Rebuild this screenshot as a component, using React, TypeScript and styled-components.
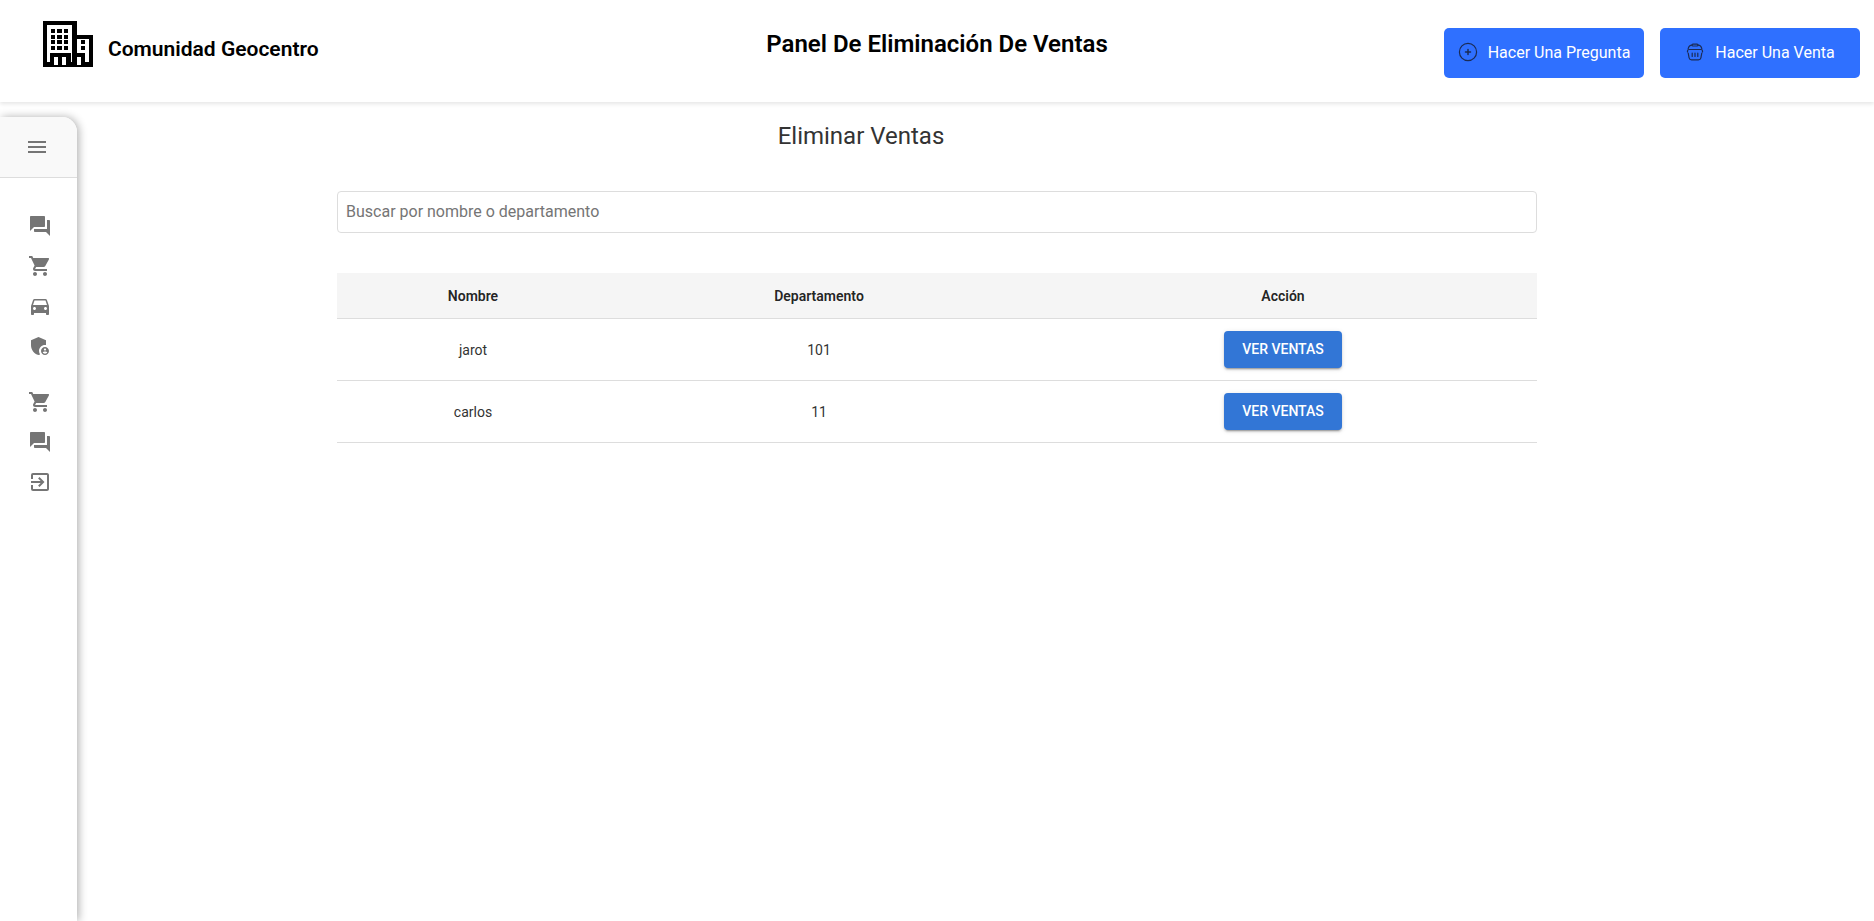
import React from "react";
import styled, { createGlobalStyle } from "styled-components";
import {
  MdAdminPanelSettings,
  MdDirectionsCar,
  MdExitToApp,
  MdForum,
  MdMenu,
  MdShoppingCart,
} from "react-icons/md";

const GlobalStyle = createGlobalStyle`
  *, *::before, *::after { box-sizing: border-box; }
  body {
    margin: 0;
    background: #fff;
    color: #000;
    font-family: Roboto, "Liberation Sans", sans-serif;
  }
  button, input { font-family: inherit; }
`;

const Page = styled.div`
  display: flex;
  flex-direction: column;
  min-height: 100vh;
`;

const Header = styled.header`
  display: grid;
  grid-template-columns: 1fr auto 1fr;
  align-items: start;
  height: 102px;
  padding: 0 14px;
  box-shadow: 0 2px 4px rgba(0, 0, 0, 0.1);
`;

const Brand = styled.a`
  display: flex;
  align-items: flex-start;
  gap: 15px;
  padding: 21px 0 0 29px;
  color: inherit;
  text-decoration: none;
`;

const BrandName = styled.span`
  padding-top: 16px;
  font-size: 21px;
  font-weight: 600;
  line-height: 24px;
`;

const PageTitle = styled.h1`
  margin: 0;
  padding-top: 28px;
  font-size: 24px;
  font-weight: 600;
  line-height: 32px;
`;

const HeaderActions = styled.div`
  display: flex;
  justify-content: flex-end;
  gap: 16px;
  padding-top: 28px;
`;

const ActionButton = styled.button`
  display: flex;
  align-items: center;
  justify-content: center;
  gap: 10px;
  width: 200px;
  height: 50px;
  padding: 0 0 2px;
  border: 0;
  border-radius: 5px;
  background: #2f70ff;
  color: #fff;
  font-size: 16px;
  cursor: pointer;
`;

const Body = styled.div`
  display: flex;
  flex: 1;
`;

const Sidebar = styled.aside`
  display: flex;
  flex-direction: column;
  flex: none;
  width: 77px;
  margin-top: 15px;
  border-top-right-radius: 15px;
  background: #fff;
  box-shadow: 2px 0 8px rgba(0, 0, 0, 0.3);
  overflow: hidden;
`;

const SidebarTop = styled.div`
  display: flex;
  align-items: center;
  height: 61px;
  padding-left: 25px;
  border-bottom: 1px solid #ddd;
  background: #f9f9f9;
`;

const IconButton = styled.button`
  display: flex;
  padding: 0;
  border: 0;
  background: none;
  color: #757575;
  cursor: pointer;
`;

const NavList = styled.ul`
  display: flex;
  flex-direction: column;
  gap: 16px;
  margin: 0;
  padding: 36px 0 0 28px;
  list-style: none;

  & + & {
    padding-top: 32px;
  }
`;

const NavLink = styled.a`
  display: flex;
  width: 24px;
  color: #757575;
`;

/* The wider right padding balances the sidebar, so the content sits in the middle of the window. */
const Main = styled.main`
  flex: 1;
  min-width: 0;
  padding: 18px 93px 32px 16px;
`;

const Content = styled.div`
  max-width: 1200px;
  margin: 0 auto;
`;

const SectionTitle = styled.h2`
  margin: 0 0 39px;
  padding-right: 152px;
  color: #333;
  font-size: 24px;
  font-weight: 400;
  line-height: 32px;
  text-align: center;
`;

const SearchInput = styled.input`
  display: block;
  width: 100%;
  height: 42px;
  margin-bottom: 40px;
  padding: 0 8px 2px;
  border: 1px solid #ddd;
  border-radius: 4px;
  background: #fff;
  color: #333;
  font-size: 16px;

  &::placeholder { color: #757575; }
`;

const Table = styled.table`
  width: 100%;
  border-collapse: separate;
  border-spacing: 0;
  table-layout: fixed;
  font-size: 14px;
  line-height: 20px;
  text-align: center;
`;

const HeadCell = styled.th<{ $width?: string }>`
  width: ${({ $width }) => $width ?? "auto"};
  height: 46px;
  padding: 12px 16px;
  border-bottom: 1px solid #ddd;
  background: #f5f5f5;
  color: rgba(0, 0, 0, 0.87);
  font-weight: 600;
`;

const Cell = styled.td`
  padding: 12px 16px;
  border-bottom: 1px solid #ddd;
  color: #333;
`;

const SalesButton = styled.button`
  height: 37px;
  padding: 0 18px 2px;
  border: 0;
  border-radius: 4px;
  background: #3276d6;
  box-shadow: 0 3px 1px -2px rgba(0, 0, 0, 0.2), 0 2px 2px rgba(0, 0, 0, 0.14), 0 1px 5px rgba(0, 0, 0, 0.12);
  color: #fff;
  font-size: 14px;
  font-weight: 500;
  text-transform: uppercase;
  vertical-align: middle;
  cursor: pointer;
`;

const BuildingLogo = () => (
  <svg width="50" height="46" viewBox="0 0 50 46" aria-hidden="true">
    <path d="M0 0h34v14h16v32H0z" />
    <path fill="#fff" d="M4 4h25v37h-1V32H7v9H4zM34 18h12v23h-4v-9h-8z" />
    <path d="M8 8h4v4H8zm6 0h5v4h-5zm7 0h4v4h-4zM8 14h4v4H8zm6 0h5v4h-5zm7 0h4v4h-4zM8 19h4v4H8zm6 0h5v4h-5zm7 0h4v4h-4zM8 25h4v4H8zm6 0h5v4h-5zm7 0h4v4h-4zM38 19h4v4h-4zm0 6h4v4h-4z" />
    <path fill="#fff" d="M11 36h4v8h-4zm8 0h4v8h-4zm15 0h4v8h-4z" />
  </svg>
);

const PlusCircle = () => (
  <svg width="20" height="20" viewBox="0 0 20 20" fill="none" stroke="#1b2b55" strokeLinecap="round" aria-hidden="true">
    <circle cx="10" cy="10" r="8.6" strokeWidth="1.2" />
    <path strokeWidth="1.5" d="M10 7.5v5M7.5 10h5" />
  </svg>
);

const Basket = () => (
  <svg width="20" height="20" viewBox="0 0 20 20" fill="none" stroke="#1b2b55" strokeWidth="1.2" strokeLinecap="round" strokeLinejoin="round" aria-hidden="true">
    <path d="M3.200 6.600C3.800 4 5.200 3.100 7 3.100M13 3.100c1.800 0 3.200.9 3.800 3.500" />
    <rect x="7" y="2.200" width="6" height="1.800" rx=".9" />
    <path d="M2.500 10V9q0-1.500 1.500-1.500h12q1.500 0 1.500 1.500v1" />
    <path d="M3.200 11l.9 4.800q.4 2 2.500 2h6.800q2.100 0 2.500-2l.9-4.800" />
    <path d="M7.200 11.200v3.300M10 11.200v3.300M12.800 11.200v3.300" />
  </svg>
);

const primaryLinks = [
  { label: "Preguntas", Icon: MdForum },
  { label: "Ventas", Icon: MdShoppingCart },
  { label: "Estacionamiento", Icon: MdDirectionsCar },
  { label: "Administración", Icon: MdAdminPanelSettings },
];

const secondaryLinks = [
  { label: "Eliminar ventas", Icon: MdShoppingCart },
  { label: "Eliminar preguntas", Icon: MdForum },
  { label: "Salir", Icon: MdExitToApp },
];

const sellers = [
  { name: "jarot", unit: "101" },
  { name: "carlos", unit: "11" },
];

const NavGroup = ({ links }: { links: typeof primaryLinks }) => (
  <NavList>
    {links.map(({ label, Icon }) => (
      <li key={label}>
        <NavLink href="#" aria-label={label}>
          <Icon size={24} />
        </NavLink>
      </li>
    ))}
  </NavList>
);

export default function App() {
  return (
    <Page>
      <GlobalStyle />
      <Header>
        <Brand href="#">
          <BuildingLogo />
          <BrandName>Comunidad Geocentro</BrandName>
        </Brand>
        <PageTitle>Panel De Eliminación De Ventas</PageTitle>
        <HeaderActions>
          <ActionButton type="button">
            <PlusCircle />
            Hacer Una Pregunta
          </ActionButton>
          <ActionButton type="button">
            <Basket />
            Hacer Una Venta
          </ActionButton>
        </HeaderActions>
      </Header>
      <Body>
        <Sidebar>
          <SidebarTop>
            <IconButton type="button" aria-label="Menú">
              <MdMenu size={24} />
            </IconButton>
          </SidebarTop>
          <nav>
            <NavGroup links={primaryLinks} />
            <NavGroup links={secondaryLinks} />
          </nav>
        </Sidebar>
        <Main>
          <Content>
            <SectionTitle>Eliminar Ventas</SectionTitle>
            <SearchInput type="text" placeholder="Buscar por nombre o departamento" aria-label="Buscar por nombre o departamento" />
            <Table>
              <thead>
                <tr>
                  <HeadCell scope="col" $width="272px">Nombre</HeadCell>
                  <HeadCell scope="col" $width="35%">Departamento</HeadCell>
                  <HeadCell scope="col">Acción</HeadCell>
                </tr>
              </thead>
              <tbody>
                {sellers.map(({ name, unit }) => (
                  <tr key={name}>
                    <Cell>{name}</Cell>
                    <Cell>{unit}</Cell>
                    <Cell>
                      <SalesButton type="button">Ver ventas</SalesButton>
                    </Cell>
                  </tr>
                ))}
              </tbody>
            </Table>
          </Content>
        </Main>
      </Body>
    </Page>
  );
}
